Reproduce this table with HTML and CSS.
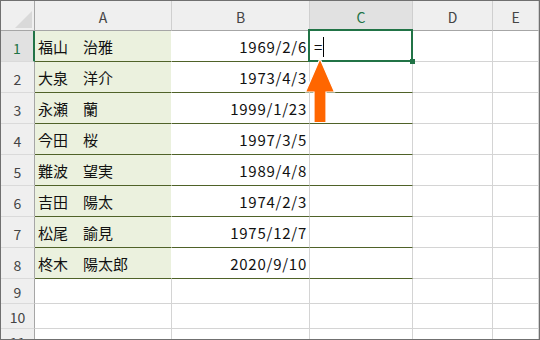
FILE: index.html
```html
<!DOCTYPE html>
<html>
	<head>
		<meta charset="UTF-8">
		<title>名簿</title>
		<link rel="stylesheet" href="styles.css">
	</head>
	<body>
		<div class="frame">
			<div class="sheet">
				<!-- 列見出し -->
				<div class="hd corner"><span class="tri"></span></div>
				<div class="hd col">A</div>
				<div class="hd col">B</div>
				<div class="hd col sel">C</div>
				<div class="hd col">D</div>
				<div class="hd col">E</div>

				<!-- 1行目 -->
				<div class="hd row sel">1</div>
				<div class="c name">福山　治雅</div>
				<div class="c date">1969/2/6</div>
				<div class="c last active">
					<span class="input">=</span><span class="caret"></span>
					<span class="handle"></span>
					<svg class="arrow" width="31" height="67" viewBox="0 0 31 67">
						<polygon points="15,1.5 29.5,35 21,35 21,65.5 9,65.5 9,35 0.5,35" fill="#ff6600" stroke="#fff" stroke-width="1.2"/>
					</svg>
				</div>
				<div class="c blank"></div>
				<div class="c blank"></div>

				<div class="hd row">2</div>
				<div class="c name">大泉　洋介</div>
				<div class="c date">1973/4/3</div>
				<div class="c last"></div>
				<div class="c blank"></div>
				<div class="c blank"></div>

				<div class="hd row">3</div>
				<div class="c name">永瀬　蘭</div>
				<div class="c date">1999/1/23</div>
				<div class="c last"></div>
				<div class="c blank"></div>
				<div class="c blank"></div>

				<div class="hd row">4</div>
				<div class="c name">今田　桜</div>
				<div class="c date">1997/3/5</div>
				<div class="c last"></div>
				<div class="c blank"></div>
				<div class="c blank"></div>

				<div class="hd row">5</div>
				<div class="c name">難波　望実</div>
				<div class="c date">1989/4/8</div>
				<div class="c last"></div>
				<div class="c blank"></div>
				<div class="c blank"></div>

				<div class="hd row">6</div>
				<div class="c name">吉田　陽太</div>
				<div class="c date">1974/2/3</div>
				<div class="c last"></div>
				<div class="c blank"></div>
				<div class="c blank"></div>

				<div class="hd row">7</div>
				<div class="c name">松尾　諭見</div>
				<div class="c date">1975/12/7</div>
				<div class="c last"></div>
				<div class="c blank"></div>
				<div class="c blank"></div>

				<div class="hd row">8</div>
				<div class="c name">柊木　陽太郎</div>
				<div class="c date">2020/9/10</div>
				<div class="c last"></div>
				<div class="c blank"></div>
				<div class="c blank"></div>

				<!-- 空行 -->
				<div class="hd row short">9</div>
				<div class="c blank"></div>
				<div class="c blank"></div>
				<div class="c blank"></div>
				<div class="c blank"></div>
				<div class="c blank"></div>

				<div class="hd row short">10</div>
				<div class="c blank"></div>
				<div class="c blank"></div>
				<div class="c blank"></div>
				<div class="c blank"></div>
				<div class="c blank"></div>

				<div class="hd row short">11</div>
				<div class="c blank"></div>
				<div class="c blank"></div>
				<div class="c blank"></div>
				<div class="c blank"></div>
				<div class="c blank"></div>
			</div>
		</div>
	</body>
</html>
```

FILE: styles.css
```css
body{
	margin: 0;
	background: #fff;
	font-family: "Noto Sans CJK JP", "Noto Sans", sans-serif;
}
.frame{
	width: 540px;
	height: 340px;
	box-sizing: border-box;
	border: 1px solid #707070;
	overflow: hidden;
}
.sheet{
	display: grid;
	grid-template-columns: 34px 137px 138px 103px 80px 1fr;
	grid-template-rows: 30px repeat(8, 31px) 25px 25px 25px;
}
.sheet > div{
	box-sizing: border-box;
	border-right: 1px solid #d4d4d4;
	border-bottom: 1px solid #d4d4d4;
	display: flex;
	align-items: center;
}

/* 見出し */
.hd{
	background: #efefef;
	color: #444;
	font-size: 14px;
	justify-content: center;
}
.hd.col{
	border-right-color: #cfcfcf;
	border-bottom-color: #a6a6a6;
	padding-top: 2px;
}
.hd.row{
	border-right-color: #a6a6a6;
	border-bottom-color: #dadada;
	padding-top: 3px;
}
.hd.short{
	padding-top: 1px;
}
.hd.sel{
	background: #e1e1e1;
	color: #217346;
}
.hd.row.sel{
	border-right: 2px solid #217346;
}
.sheet > .corner{
	border-right-color: #a6a6a6;
	border-bottom-color: #a6a6a6;
	align-items: flex-end;
	justify-content: flex-end;
	padding: 0 2px 2px 0;
}
.tri{
	width: 17px;
	height: 17px;
	background: #d9d9d9;
	clip-path: polygon(100% 0, 100% 100%, 0 100%);
}

/* セル */
.c{
	font-size: 15px;
	color: #111;
	padding-top: 1px;
}
.sheet > .name{
	background: #ebf1de;
	border-right-color: #fff;
	border-bottom-color: #4f6228;
	padding-left: 3px;
}
.sheet > .date{
	justify-content: flex-end;
	padding-right: 2px;
	letter-spacing: 0.75px;
	border-bottom-color: #4f6228;
}
.sheet > .last{
	border-bottom-color: #4f6228;
}
.active{
	position: relative;
	z-index: 2;
	padding-left: 4px;
}
.active::before{
	content: "";
	position: absolute;
	left: -2px;
	top: -2px;
	width: 105px;
	height: 33px;
	box-sizing: border-box;
	border: 2px solid #217346;
}
.input{
	font-size: 15px;
}
.caret{
	display: inline-block;
	width: 1px;
	height: 20px;
	margin-left: 1px;
	background: #000;
}
.handle{
	position: absolute;
	left: 100px;
	top: 28px;
	width: 5px;
	height: 5px;
	background: #217346;
}
.arrow{
	position: absolute;
	left: -5px;
	top: 26px;
}
```
